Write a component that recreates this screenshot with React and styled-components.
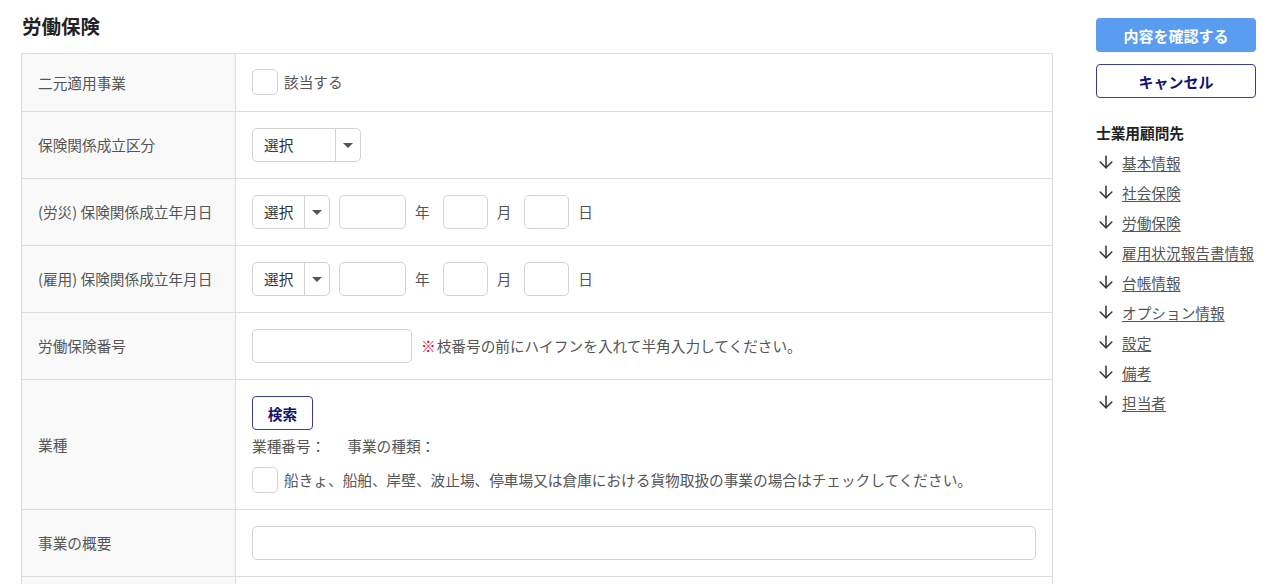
import React from "react";
import styled, { createGlobalStyle } from "styled-components";
import { ArrowDown } from "lucide-react";

const Global = createGlobalStyle`
  * { box-sizing: border-box; }
  body {
    margin: 0;
    background: #fff;
    font-family: "Noto Sans CJK JP", "Noto Sans", sans-serif;
    color: #333;
  }
`;

const FS = "14.67px";

const Page = styled.div`
  display: flex;
  align-items: flex-start;
  gap: 43px;
  padding: 0 24px 0 21px;
`;

const Main = styled.div`
  width: 1032px;
  flex-shrink: 0;
`;

const Title = styled.h2`
  margin: 0;
  padding: 13px 0 0 1px;
  height: 53px;
  font-size: 19.5px;
  font-weight: 700;
  color: #222;
  line-height: 26px;
`;

const Table = styled.div`
  border: 1px solid #dcdcdc;
  border-bottom: none;
`;

const Row = styled.div`
  display: grid;
  grid-template-columns: 214px 1fr;
  border-bottom: 1px solid #dcdcdc;
`;

const Label = styled.div`
  background: #f9f9f9;
  border-right: 1px solid #dcdcdc;
  padding: 0 16px;
  display: flex;
  align-items: center;
  font-size: ${FS};
  line-height: 20px;
  color: #555;
`;

const Cell = styled.div`
  padding: ${(p) => (p.$tight ? "15px 16px 16px" : "16px")};
  display: flex;
  flex-direction: ${(p) => (p.$column ? "column" : "row")};
  align-items: ${(p) => (p.$column ? "flex-start" : "center")};
  font-size: ${FS};
  line-height: 20px;
  color: #555;
`;

const Check = styled.span`
  display: inline-block;
  width: 26px;
  height: 26px;
  border: 1px solid #d3d3d3;
  border-radius: 5px;
  background: #fff;
  flex-shrink: 0;
`;

const CheckLabel = styled.label`
  display: flex;
  align-items: center;
  gap: 6px;
  font-size: ${FS};
  line-height: 20px;
  color: #555;
`;

const SelectBox = styled.div`
  display: flex;
  width: ${(p) => p.$w}px;
  height: 34px;
  border: 1px solid #d3d3d3;
  border-radius: 5px;
  background: #fff;
  flex-shrink: 0;
`;

const SelectText = styled.span`
  flex: 1;
  display: flex;
  align-items: center;
  padding-left: 11px;
  font-size: ${FS};
  color: #333;
`;

const SelectArrow = styled.span`
  width: 25px;
  border-left: 1px solid #d3d3d3;
  display: flex;
  align-items: center;
  justify-content: center;
  &::after {
    content: "";
    border-left: 5px solid transparent;
    border-right: 5px solid transparent;
    border-top: 5px solid #555;
  }
`;

const Input = styled.span`
  display: inline-block;
  width: ${(p) => p.$w}px;
  height: 34px;
  margin-left: ${(p) => p.$ml || 0}px;
  border: 1px solid #d3d3d3;
  border-radius: 5px;
  background: #fff;
  flex-shrink: 0;
`;

const Unit = styled.span`
  font-size: ${FS};
  color: #555;
  margin: 0 ${(p) => p.$r || 0}px 0 ${(p) => p.$l || 0}px;
`;

const Note = styled.span`
  margin-left: 9px;
  font-size: ${FS};
  color: #555;
  b {
    color: #e60012;
    font-weight: 700;
    margin-right: 1px;
  }
`;

const SearchButton = styled.button`
  width: 61px;
  height: 34px;
  border: 1px solid #3d3d8f;
  border-radius: 4px;
  background: #fff;
  color: #14146b;
  font-family: inherit;
  font-size: ${FS};
  font-weight: 700;
  padding: 0;
`;

const Info = styled.div`
  display: flex;
  gap: 22px;
  margin: 5px 0 10px;
  font-size: ${FS};
  color: #555;
  line-height: 22px;
`;

const Side = styled.aside`
  width: 160px;
  flex-shrink: 0;
  padding-top: 18px;
`;

const PrimaryButton = styled.button`
  display: block;
  width: 160px;
  height: 34px;
  border: none;
  border-radius: 4px;
  background: #5a9cf0;
  color: #fff;
  font-family: inherit;
  font-size: 15px;
  font-weight: 700;
`;

const OutlineButton = styled.button`
  display: block;
  width: 160px;
  height: 34px;
  margin-top: 12px;
  border: 1px solid #3d3d8f;
  border-radius: 4px;
  background: #fff;
  color: #14146b;
  font-family: inherit;
  font-size: 15px;
  font-weight: 700;
`;

const NavTitle = styled.div`
  margin-top: 24px;
  font-size: ${FS};
  font-weight: 700;
  color: #222;
  line-height: 22px;
`;

const NavList = styled.ul`
  list-style: none;
  margin: 3px 0 0;
  padding: 0;
`;

const NavItem = styled.li`
  display: flex;
  align-items: center;
  gap: 6px;
  height: 30px;
  font-size: ${FS};
  color: #555;
  a {
    color: #555;
    text-decoration: underline;
    text-underline-offset: 2px;
  }
  svg { flex-shrink: 0; color: #333; }
`;

const navLinks = [
  "基本情報",
  "社会保険",
  "労働保険",
  "雇用状況報告書情報",
  "台帳情報",
  "オプション情報",
  "設定",
  "備考",
  "担当者",
];

function Select({ w }) {
  return (
    <SelectBox $w={w}>
      <SelectText>選択</SelectText>
      <SelectArrow />
    </SelectBox>
  );
}

function DateRow({ label }) {
  return (
    <Row>
      <Label>{label}</Label>
      <Cell>
        <Select w={78} />
        <Input $w={67} $ml={9} />
        <Unit $l={9} $r={13}>年</Unit>
        <Input $w={45} />
        <Unit $l={9} $r={13}>月</Unit>
        <Input $w={45} />
        <Unit $l={9}>日</Unit>
      </Cell>
    </Row>
  );
}

export default function App() {
  return (
    <>
      <Global />
      <Page>
        <Main>
          <Title>労働保険</Title>
          <Table>
            <Row>
              <Label>二元適用事業</Label>
              <Cell $tight>
                <CheckLabel>
                  <Check />
                  該当する
                </CheckLabel>
              </Cell>
            </Row>
            <Row>
              <Label>保険関係成立区分</Label>
              <Cell>
                <Select w={109} />
              </Cell>
            </Row>
            <DateRow label="(労災) 保険関係成立年月日" />
            <DateRow label="(雇用) 保険関係成立年月日" />
            <Row>
              <Label>労働保険番号</Label>
              <Cell>
                <Input $w={160} />
                <Note>
                  <b>※</b>枝番号の前にハイフンを入れて半角入力してください。
                </Note>
              </Cell>
            </Row>
            <Row>
              <Label>業種</Label>
              <Cell $column>
                <SearchButton>検索</SearchButton>
                <Info>
                  <span>業種番号：</span>
                  <span>事業の種類：</span>
                </Info>
                <CheckLabel>
                  <Check />
                  船きょ、船舶、岸壁、波止場、停車場又は倉庫における貨物取扱の事業の場合はチェックしてください。
                </CheckLabel>
              </Cell>
            </Row>
            <Row>
              <Label>事業の概要</Label>
              <Cell>
                <Input $w={784} />
              </Cell>
            </Row>
            <Row>
              <Label>&nbsp;</Label>
              <Cell>
                <Input $w={160} />
              </Cell>
            </Row>
          </Table>
        </Main>
        <Side>
          <PrimaryButton>内容を確認する</PrimaryButton>
          <OutlineButton>キャンセル</OutlineButton>
          <NavTitle>士業用顧問先</NavTitle>
          <NavList>
            {navLinks.map((t) => (
              <NavItem key={t}>
                <ArrowDown size={20} strokeWidth={1.8} />
                <a href="#">{t}</a>
              </NavItem>
            ))}
          </NavList>
        </Side>
      </Page>
    </>
  );
}
